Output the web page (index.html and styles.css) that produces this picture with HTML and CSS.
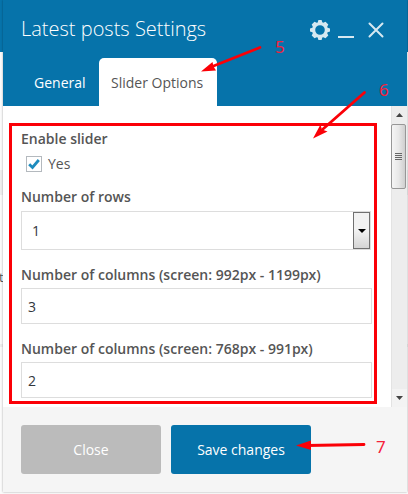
FILE: index.html
```
<!DOCTYPE html>
<html lang="en">
<head>
<meta charset="utf-8">
<title>Latest posts Settings</title>
<link rel="stylesheet" href="styles.css">
</head>
<body>
<div class="backdrop"><span class="backdrop-text">t</span></div>
<main class="dialog">
  <header class="header">
    <div class="titlebar">
      <h1 class="title">Latest posts Settings</h1>
      <div class="controls">
        <svg width="20" height="20" viewBox="0 0 20 20"><path fill="currentColor" fill-rule="evenodd" d="M8.4 0h3.2l.7 2.3 1 .4L15.500 1.700l2.800 2.800-1.100 2.200.4 1 2.400.7v3.200l-2.400.7-.4 1 1.100 2.200-2.800 2.800-2.200-1.100-1 .4-.7 2.400H8.400l-.7-2.400-1-.4-2.200 1.100-2.800-2.800 1.100-2.200-.4-1L0 11.600V8.400l2.400-.7.4-1L1.700 4.500l2.800-2.800 2.200 1.100 1-.4zM10 5.200a4.800 4.800 0 1 0 0 9.600 4.800 4.800 0 0 0 0-9.600z"/></svg>
        <svg class="minimize" width="16" height="20" viewBox="0 0 16 20"><path d="M0 17h16" stroke="currentColor" stroke-width="2"/></svg>
        <svg width="16" height="20" viewBox="0 0 16 20"><path d="M1.500 3.500l13 13M14.500 3.500l-13 13" stroke="currentColor" stroke-width="2" stroke-linecap="round"/></svg>
      </div>
    </div>
    <nav class="tabs">
      <a class="tab tab-general">General</a>
      <a class="tab tab-active">Slider Options</a>
    </nav>
  </header>
  <section class="body">
    <form class="fields">
      <div class="label">Enable slider</div>
      <div class="check-row">
        <span class="checkbox"><svg width="12" height="12" viewBox="0 0 12 12"><path d="M1.200 6.200l3.300 3.300L10.800 2" fill="none" stroke="#1e8cbe" stroke-width="2.800"/></svg></span>
        <span>Yes</span>
      </div>
      <div class="label">Number of rows</div>
      <div class="select"><span>1</span><span class="select-button"><svg width="8" height="4" viewBox="0 0 8 4"><path d="M0 0h8L4 4z"/></svg></span></div>
      <div class="label">Number of columns (screen: 992px - 1199px)</div>
      <div class="input">3</div>
      <div class="label">Number of columns (screen: 768px - 991px)</div>
      <div class="input input-last">2</div>
    </form>
    <div class="scrollbar">
      <span class="scroll-arrow"><svg width="7" height="4" viewBox="0 0 7 4"><path d="M0 4h7L3.500 0z"/></svg></span>
      <span class="thumb"><i></i><i></i><i></i><i></i></span>
      <span class="scroll-arrow scroll-down"><svg width="7" height="4" viewBox="0 0 7 4"><path d="M0 0h7L3.500 4z"/></svg></span>
    </div>
  </section>
  <footer class="footer">
    <span class="button close">Close</span>
    <span class="button save">Save changes</span>
  </footer>
</main>
<svg class="arrows" width="408" height="494" viewBox="0 0 408 494">
  <g stroke="#fb0007" stroke-width="2.800" stroke-linecap="round"><path d="M260 47.500L211 67M364.500 92.500L323 129M364 444.500L307 445.500"/></g>
  <g fill="#fb0007"><path d="M201 71.500l11.500-9.500 1 4.500 2.500 4zM313 138.500l7.500-14 1.500 5 5.500 2zM296 445.500l15-5v9.500z"/></g>
</svg>
<span class="marker marker-five">5</span>
<span class="marker marker-six">6</span>
<span class="marker marker-seven">7</span>
</body>
</html>
```
FILE: styles.css
```
* { box-sizing: border-box; }
body {
  margin: 0;
  width: 408px;
  height: 494px;
  position: relative;
  overflow: hidden;
  background: #f1f1f1;
  font-family: "Open Sans", sans-serif;
  font-size: 14px;
  color: #555;
}
.backdrop {
  position: absolute;
  inset: 0;
  padding-top: 267px;
  background: linear-gradient(#0673aa 52px, #fbfbfb 52px, #fbfbfb 170px, #efefef 170px, #efefef 195px, #fbfbfb 195px, #fbfbfb 344px, #eee 344px, #eee 347px, #fbfbfb 347px);
}
.backdrop-text { display: block; font-size: 13px; line-height: 20px; margin-left: -1px; }
.dialog {
  position: relative;
  display: flex;
  flex-direction: column;
  width: 404px;
  height: 492px;
  margin-left: 3px;
  background: #fff;
  box-shadow: 0 0 2px rgba(0, 0, 0, .35);
}
.header {
  display: flex;
  flex-direction: column;
  justify-content: space-between;
  height: 106px;
  background: #0673aa;
  color: #fff;
}
.titlebar {
  display: flex;
  justify-content: space-between;
  height: 58px;
  padding: 14px 23px 0 18px;
}
.title { margin: 0; font-size: 20px; font-weight: 300; line-height: 30px; white-space: nowrap; }
.controls { display: flex; gap: 8px; padding-top: 6px; color: #d6e8f1; }
.controls svg:last-child { margin-left: 6px; }
.tabs { display: flex; height: 48px; }
.tab { line-height: 50px; white-space: nowrap; }
.tab-general { width: 96px; padding-left: 31px; }
.tab-active {
  width: 118px;
  padding-left: 12px;
  border-radius: 5px 5px 0 0;
  background: #fff;
  color: #555;
}
.body { display: flex; justify-content: space-between; height: 301px; }
.fields {
  display: flex;
  flex-direction: column;
  width: 368px;
  height: 281px;
  margin: 17px 0 0 6px;
  padding: 1px 2px 0 9px;
  border: 3px solid #fb0007;
}
.label { flex: none; height: 24px; line-height: 24px; font-weight: 600; font-size: 14px; white-space: nowrap; }
.check-row { display: flex; flex: none; align-items: center; gap: 6px; height: 25px; padding-left: 5px; margin-bottom: 9px; }
.checkbox {
  display: flex;
  align-items: center;
  justify-content: center;
  width: 16px;
  height: 16px;
  border: 1px solid #b4b9be;
}
.select, .input { border: 1px solid #ddd; color: #32373c; }
.select {
  display: flex;
  align-items: center;
  justify-content: space-between;
  flex: none;
  height: 39px;
  width: 350px;
  margin: 2px 0 13px;
  padding-left: 10px;
}
.select-button {
  display: flex;
  align-items: center;
  justify-content: center;
  width: 17px;
  height: 37px;
  border: 1px solid #707070;
  background: linear-gradient(#f2f2f2 50%, #d5d5d5);
}
.input { flex: none; width: 351px; height: 36px; margin: 1px 0 13px; padding-left: 6px; line-height: 36px; }
.input-last { margin-bottom: 0; }
.scrollbar {
  display: flex;
  flex-direction: column;
  width: 16px;
  border-left: 1px solid #e3e3e3;
  background: #ededed;
}
.scroll-arrow { display: flex; align-items: center; justify-content: center; height: 18px; fill: #444; }
.scroll-down { margin-top: auto; background: #f3f3f3; }
.thumb {
  display: flex;
  flex-direction: column;
  align-items: center;
  justify-content: center;
  gap: 1px;
  width: 15px;
  height: 65px;
  margin-left: -1px;
  border: 1px solid #979797;
  border-radius: 2px;
  background: linear-gradient(90deg, #f5f5f5, #e8e8e8 50%, #cfcfcf);
}
.thumb i { width: 7px; height: 1px; background: #666; }
.footer { display: flex; gap: 10px; height: 85px; padding: 18px 18px 0; background: #f5f5f5; }
.button { width: 140px; height: 49px; border-radius: 3px; color: #fff; line-height: 50px; text-align: center; }
.close { background: #bbb; }
.save { background: #0673aa; }
.arrows { position: absolute; left: 0; top: 0; }
.marker { position: absolute; color: #f5203a; font-size: 17px; line-height: 20px; font-family: "Noto Sans", sans-serif; font-weight: 400; }
.marker-five { left: 275px; top: 37px; }
.marker-six { left: 379px; top: 80px; }
.marker-seven { left: 376px; top: 437px; }
```
